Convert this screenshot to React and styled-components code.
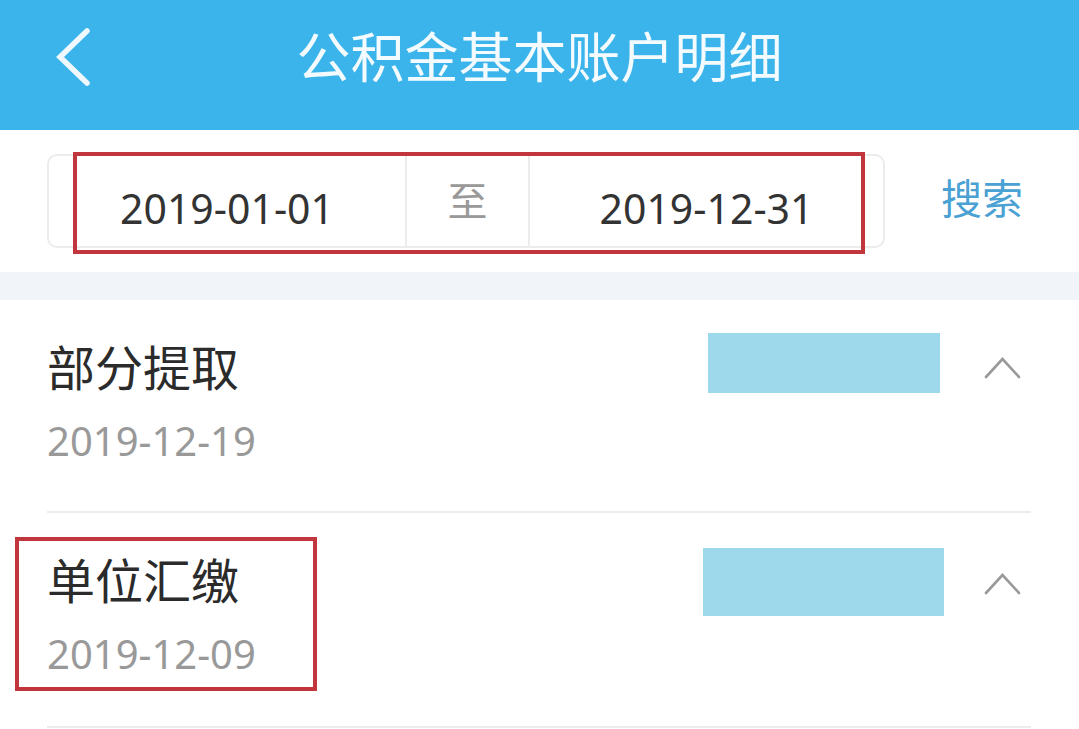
import React from 'react';
import styled, { createGlobalStyle } from 'styled-components';

const Global = createGlobalStyle`
  html, body { margin: 0; padding: 0; background: #fff; }
  body {
    font-family: "Noto Sans", "Noto Sans CJK SC", sans-serif;
    overflow: hidden;
  }
  * { box-sizing: border-box; }
`;

const Page = styled.div`
  width: 1079px;
  height: 729px;
  overflow: hidden;
  background: #fff;
  display: flex;
  flex-direction: column;
`;

const Header = styled.header`
  flex: none;
  height: 130px;
  background: #3ab4eb;
  display: grid;
  grid-template-columns: 1fr auto 1fr;
  align-items: start;
  padding-top: 27px;
  color: #f4fbff;
`;

const BackButton = styled.button`
  justify-self: start;
  margin-left: 54px;
  margin-top: 0;
  width: 40px;
  height: 60px;
  padding: 0;
  border: 0;
  background: none;
  display: flex;
  cursor: pointer;
`;

const Title = styled.h1`
  margin: 0;
  font-size: 54px;
  font-weight: 400;
  line-height: 60px;
  white-space: nowrap;
`;

const SearchBar = styled.section`
  position: relative;
  flex: none;
  height: 142px;
  display: flex;
  align-items: center;
  justify-content: space-between;
  padding: 0 56px 0 47px;
`;

const DateBox = styled.div`
  width: 838px;
  height: 94px;
  border: 2px solid #ececec;
  border-radius: 10px;
  display: grid;
  grid-template-columns: 356px 123px 1fr;
`;

const Cell = styled.div`
  display: flex;
  align-items: center;
  justify-content: center;
  padding-top: ${p => p.$shift || 0}px;
  border-left: ${p => (p.$divider ? '2px solid #ececec' : 'none')};
  font-size: ${p => p.$size || 41}px;
  color: ${p => p.$color || '#333'};
  line-height: 1;
`;

const SearchLink = styled.span`
  font-size: 41px;
  color: #4aa1d3;
  line-height: 1;
  margin-top: -6px;
`;

const Annotation = styled.div`
  position: absolute;
  left: ${p => p.$left}px;
  top: ${p => p.$top}px;
  width: ${p => p.$w}px;
  height: ${p => p.$h}px;
  border: 4px solid #c1363c;
  pointer-events: none;
`;

const Band = styled.div`
  flex: none;
  height: 28px;
  background: #f1f4f8;
`;

const List = styled.ul`
  list-style: none;
  margin: 0;
  padding: 0;
`;

const Item = styled.li`
  position: relative;
  height: ${p => p.$h}px;
  margin: 0 48px 0 47px;
  border-bottom: 2px solid #ececec;
  display: flex;
  justify-content: space-between;
  align-items: flex-start;
`;

const Info = styled.div`
  padding-top: ${p => p.$top}px;
  display: flex;
  flex-direction: column;
`;

const ItemTitle = styled.div`
  font-size: 48px;
  line-height: 60px;
  color: #2b2b2b;
`;

const ItemDate = styled.div`
  margin-top: 19px;
  font-size: 40px;
  line-height: 48px;
  color: #999;
`;

const Side = styled.div`
  display: flex;
  align-items: flex-start;
`;

const Amount = styled.div`
  margin-top: ${p => p.$top}px;
  width: ${p => p.$w}px;
  height: ${p => p.$h}px;
  background: #9dd9ea;
`;

const Toggle = styled.button`
  margin: ${p => p.$top}px 10px 0 ${p => p.$gap}px;
  width: 37px;
  height: 24px;
  padding: 0;
  border: 0;
  background: none;
  display: flex;
`;

const BackIcon = () => (
  <svg width="40" height="60" viewBox="0 0 40 60">
    <polyline
      points="33,4 6,30 33,56"
      fill="none"
      stroke="#eef8fd"
      strokeWidth="5.5"
      strokeLinecap="round"
      strokeLinejoin="miter"
    />
  </svg>
);

const UpIcon = () => (
  <svg width="37" height="24" viewBox="0 0 37 24">
    <polyline
      points="2,21 18.5,3 35,21"
      fill="none"
      stroke="#9a9a9a"
      strokeWidth="2.6"
      strokeLinecap="round"
    />
  </svg>
);

const records = [
  { title: '部分提取', date: '2019-12-19', h: 213, top: 38, amt: { top: 33, w: 232, h: 60, gap: 44 }, chev: 56 },
  { title: '单位汇缴', date: '2019-12-09', h: 215, top: 38, amt: { top: 35, w: 241, h: 68, gap: 40 }, chev: 59, marked: true },
];

export default function App() {
  return (
    <Page>
      <Global />
      <Header>
        <BackButton aria-label="返回"><BackIcon /></BackButton>
        <Title>公积金基本账户明细</Title>
        <span />
      </Header>
      <SearchBar>
        <DateBox>
          <Cell $shift={14}>2019-01-01</Cell>
          <Cell $divider $size={40} $color="#999">至</Cell>
          <Cell $divider $shift={14}>2019-12-31</Cell>
        </DateBox>
        <SearchLink>搜索</SearchLink>
        <Annotation $left={73} $top={22} $w={792} $h={102} />
      </SearchBar>
      <Band />
      <List>
        {records.map(r => (
          <Item key={r.title} $h={r.h}>
            <Info $top={r.top}>
              <ItemTitle>{r.title}</ItemTitle>
              <ItemDate>{r.date}</ItemDate>
            </Info>
            <Side>
              <Amount $top={r.amt.top} $w={r.amt.w} $h={r.amt.h} />
              <Toggle $top={r.chev} $gap={r.amt.gap} aria-label="收起"><UpIcon /></Toggle>
            </Side>
            {r.marked && <Annotation $left={-32} $top={24} $w={302} $h={154} />}
          </Item>
        ))}
      </List>
    </Page>
  );
}
